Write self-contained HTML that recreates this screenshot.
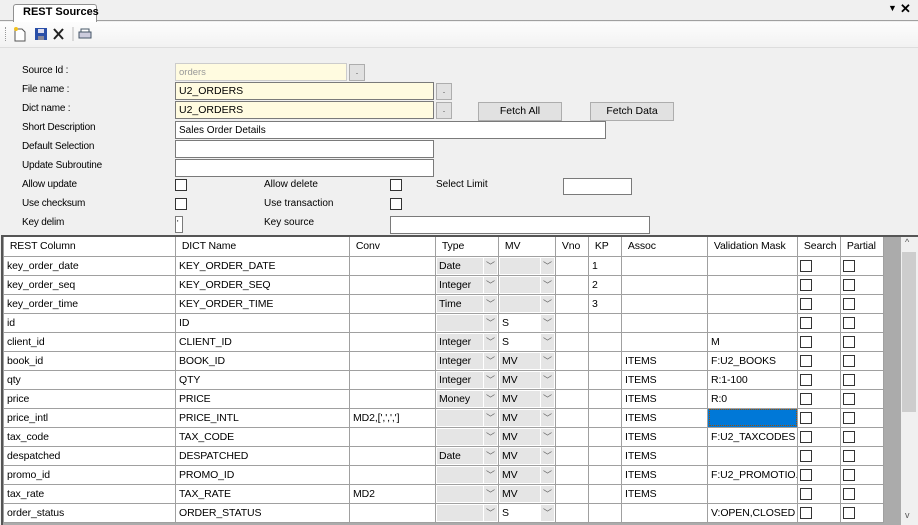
<!DOCTYPE html>
<html><head><style>
*{margin:0;padding:0;box-sizing:border-box}
body{width:918px;height:525px;background:#f0f0f0;font-family:"Liberation Sans",Arial,sans-serif;font-size:11px;color:#000;position:relative;overflow:hidden}
.a{position:absolute}
.lbl{position:absolute;left:22px;font-size:10px;letter-spacing:-0.2px}
.in{position:absolute;background:#fff;border:1px solid #7a7a7a;height:18px;font-size:10.5px;padding:2px 3px;line-height:13px}
.y{background:#fffbe0}
.dot{position:absolute;width:16px;height:17px;background:#e1e1e1;border:1px solid #adadad;font-size:9px;text-align:center;line-height:12px;color:#444}
.btn{position:absolute;height:19px;background:#e1e1e1;border:1px solid #adadad;text-align:center;line-height:17px;font-size:10.5px}
.cb{position:absolute;width:12px;height:12px;border:1px solid #333;background:#fff}
table{border-collapse:collapse;position:absolute;left:3px;top:237px;table-layout:fixed;width:880px;background:#fff}
td{height:19px;border:1px solid #a0a0a0;font-size:10.5px;padding:1px 3px 0;white-space:nowrap;overflow:hidden;position:relative;line-height:17px;letter-spacing:-0.1px}
tr.h td{height:19px;border-top:none}
.cmb{padding:0}
.cmb div{position:absolute;left:1px;top:1px;right:1px;bottom:1px;background:#e5e5e5;padding-left:2px;line-height:17px}
.cmb span{position:absolute;right:1px;top:1px;width:14px;bottom:1px;border-left:1px solid #fff;background:#e5e5e5;color:#666;font-size:9px;text-align:center;line-height:16px}
.ck{padding:0}
.ck i{position:absolute;left:2px;top:3px;width:12px;height:12px;border:1px solid #333;background:#fff}
</style></head><body>
<div class="a" style="left:0;top:0;width:918px;height:21px;background:#f0f0f0;border-bottom:1px solid #a0a0a0"></div>
<div class="a" style="left:13px;top:4px;width:84px;height:18px;background:#fff;border:1px solid #909090;border-bottom:none;border-radius:3px 3px 0 0"></div>
<div class="a" style="left:23px;top:6px;font-weight:bold;font-size:11px">REST Sources</div>
<div class="a" style="left:888px;top:3px;font-size:9px">▼</div>
<div class="a" style="left:900px;top:1px;font-size:13px;font-weight:bold">✕</div>
<div class="a" style="left:0;top:22px;width:918px;height:26px;background:linear-gradient(#fdfdfd,#f2f2f2);border-bottom:1px solid #ddd"></div>
<div class="a" style="left:5px;top:27px;width:1px;height:14px;border-left:1px dotted #999"></div>
<svg class="a" style="left:13px;top:26px" width="82" height="16">
<path d="M2 3h7l3 3v9H2z" fill="#fff" stroke="#555"/><circle cx="3" cy="3" r="2" fill="#f0c020"/>
<rect x="22" y="2" width="12" height="12" fill="#2a4fa8"/><rect x="25" y="3" width="6" height="4" fill="#dde"/><rect x="25" y="10" width="6" height="4" fill="#889"/>
<path d="M41 3l9 10M50 3l-9 10" stroke="#222" stroke-width="2"/>
<line x1="60" y1="1" x2="60" y2="15" stroke="#bbb"/>
<path d="M66 6h12v6H66z" fill="#ccd" stroke="#456"/><path d="M68 3h8v3h-8z" fill="#fff" stroke="#456"/>
</svg>
<div class="lbl" style="top:65px">Source Id :</div>
<div class="lbl" style="top:84px">File name :</div>
<div class="lbl" style="top:103px">Dict name :</div>
<div class="lbl" style="top:122px">Short Description</div>
<div class="lbl" style="top:141px">Default Selection</div>
<div class="lbl" style="top:160px">Update Subroutine</div>
<div class="lbl" style="top:179px">Allow update</div>
<div class="lbl" style="top:198px">Use checksum</div>
<div class="lbl" style="top:217px">Key delim</div>
<div class="in y" style="left:175px;top:63px;width:172px;border-color:#ccc;color:#999;font-size:9.5px">orders</div>
<div class="dot" style="left:349px;top:64px">.</div>
<div class="in y" style="left:175px;top:82px;width:259px">U2_ORDERS</div>
<div class="dot" style="left:436px;top:83px">.</div>
<div class="in y" style="left:175px;top:101px;width:259px">U2_ORDERS</div>
<div class="dot" style="left:436px;top:102px">.</div>
<div class="btn" style="left:478px;top:102px;width:84px">Fetch All</div>
<div class="btn" style="left:590px;top:102px;width:84px">Fetch Data</div>
<div class="in" style="left:175px;top:121px;width:431px;font-size:10px">Sales Order Details</div>
<div class="in" style="left:175px;top:140px;width:259px"></div>
<div class="in" style="left:175px;top:159px;width:259px"></div>
<div class="cb" style="left:175px;top:179px"></div>
<div class="a" style="left:264px;top:179px;font-size:10px">Allow delete</div>
<div class="cb" style="left:390px;top:179px"></div>
<div class="a" style="left:436px;top:179px;font-size:10px">Select Limit</div>
<div class="in" style="left:563px;top:178px;width:69px;height:17px"></div>
<div class="cb" style="left:175px;top:198px"></div>
<div class="a" style="left:264px;top:198px;font-size:10px">Use transaction</div>
<div class="cb" style="left:390px;top:198px"></div>
<div class="in" style="left:175px;top:216px;width:8px;height:17px;padding:0 1px;font-size:8px">'</div>
<div class="a" style="left:264px;top:217px;font-size:10px">Key source</div>
<div class="in" style="left:390px;top:216px;width:260px;height:18px"></div>
<div class="a" style="left:1px;top:235px;width:917px;height:290px;border:2px solid #555;border-bottom:none;background:#ababab"></div>
<div class="a" style="left:901px;top:237px;width:17px;height:288px;background:#f0f0f0"></div>
<div class="a" style="left:905px;top:237px;font-size:9px;color:#555">^</div>
<div class="a" style="left:902px;top:252px;width:14px;height:160px;background:#cdcdcd"></div>
<div class="a" style="left:905px;top:510px;font-size:9px;color:#555">v</div>
<table>
<colgroup><col style="width:172px"><col style="width:174px"><col style="width:86px"><col style="width:63px"><col style="width:57px"><col style="width:33px"><col style="width:33px"><col style="width:86px"><col style="width:90px"><col style="width:43px"><col style="width:43px"></colgroup>
<tr class="h"><td>&nbsp;REST Column</td><td>&nbsp;DICT Name</td><td>&nbsp;Conv</td><td>&nbsp;Type</td><td>&nbsp;MV</td><td>&nbsp;Vno</td><td>&nbsp;KP</td><td>&nbsp;Assoc</td><td>&nbsp;Validation Mask</td><td>&nbsp;Search</td><td>&nbsp;Partial</td></tr>
<tr><td>key_order_date</td><td>KEY_ORDER_DATE</td><td></td><td class="cmb"><div>Date</div><span>﹀</span></td><td class="cmb"><div></div><span>﹀</span></td><td></td><td>1</td><td></td><td></td><td class="ck"><i></i></td><td class="ck"><i></i></td></tr>
<tr><td>key_order_seq</td><td>KEY_ORDER_SEQ</td><td></td><td class="cmb"><div>Integer</div><span>﹀</span></td><td class="cmb"><div></div><span>﹀</span></td><td></td><td>2</td><td></td><td></td><td class="ck"><i></i></td><td class="ck"><i></i></td></tr>
<tr><td>key_order_time</td><td>KEY_ORDER_TIME</td><td></td><td class="cmb"><div>Time</div><span>﹀</span></td><td class="cmb"><div></div><span>﹀</span></td><td></td><td>3</td><td></td><td></td><td class="ck"><i></i></td><td class="ck"><i></i></td></tr>
<tr><td>id</td><td>ID</td><td></td><td class="cmb"><div></div><span>﹀</span></td><td class="cmb"><div style="background:#fff">S</div><span>﹀</span></td><td></td><td></td><td></td><td></td><td class="ck"><i></i></td><td class="ck"><i></i></td></tr>
<tr><td>client_id</td><td>CLIENT_ID</td><td></td><td class="cmb"><div>Integer</div><span>﹀</span></td><td class="cmb"><div style="background:#fff">S</div><span>﹀</span></td><td></td><td></td><td></td><td>M</td><td class="ck"><i></i></td><td class="ck"><i></i></td></tr>
<tr><td>book_id</td><td>BOOK_ID</td><td></td><td class="cmb"><div>Integer</div><span>﹀</span></td><td class="cmb"><div>MV</div><span>﹀</span></td><td></td><td></td><td>ITEMS</td><td>F:U2_BOOKS</td><td class="ck"><i></i></td><td class="ck"><i></i></td></tr>
<tr><td>qty</td><td>QTY</td><td></td><td class="cmb"><div>Integer</div><span>﹀</span></td><td class="cmb"><div>MV</div><span>﹀</span></td><td></td><td></td><td>ITEMS</td><td>R:1-100</td><td class="ck"><i></i></td><td class="ck"><i></i></td></tr>
<tr><td>price</td><td>PRICE</td><td></td><td class="cmb"><div>Money</div><span>﹀</span></td><td class="cmb"><div>MV</div><span>﹀</span></td><td></td><td></td><td>ITEMS</td><td>R:0</td><td class="ck"><i></i></td><td class="ck"><i></i></td></tr>
<tr><td>price_intl</td><td>PRICE_INTL</td><td>MD2,[',',',']</td><td class="cmb"><div></div><span>﹀</span></td><td class="cmb"><div>MV</div><span>﹀</span></td><td></td><td></td><td>ITEMS</td><td style="background:#0078d7;outline:1px dotted #a05000;outline-offset:-2px"></td><td class="ck"><i></i></td><td class="ck"><i></i></td></tr>
<tr><td>tax_code</td><td>TAX_CODE</td><td></td><td class="cmb"><div></div><span>﹀</span></td><td class="cmb"><div>MV</div><span>﹀</span></td><td></td><td></td><td>ITEMS</td><td>F:U2_TAXCODES</td><td class="ck"><i></i></td><td class="ck"><i></i></td></tr>
<tr><td>despatched</td><td>DESPATCHED</td><td></td><td class="cmb"><div>Date</div><span>﹀</span></td><td class="cmb"><div>MV</div><span>﹀</span></td><td></td><td></td><td>ITEMS</td><td></td><td class="ck"><i></i></td><td class="ck"><i></i></td></tr>
<tr><td>promo_id</td><td>PROMO_ID</td><td></td><td class="cmb"><div></div><span>﹀</span></td><td class="cmb"><div>MV</div><span>﹀</span></td><td></td><td></td><td>ITEMS</td><td>F:U2_PROMOTIO...</td><td class="ck"><i></i></td><td class="ck"><i></i></td></tr>
<tr><td>tax_rate</td><td>TAX_RATE</td><td>MD2</td><td class="cmb"><div></div><span>﹀</span></td><td class="cmb"><div>MV</div><span>﹀</span></td><td></td><td></td><td>ITEMS</td><td></td><td class="ck"><i></i></td><td class="ck"><i></i></td></tr>
<tr><td>order_status</td><td>ORDER_STATUS</td><td></td><td class="cmb"><div></div><span>﹀</span></td><td class="cmb"><div style="background:#fff">S</div><span>﹀</span></td><td></td><td></td><td></td><td>V:OPEN,CLOSED</td><td class="ck"><i></i></td><td class="ck"><i></i></td></tr>
</table>
</body></html>
